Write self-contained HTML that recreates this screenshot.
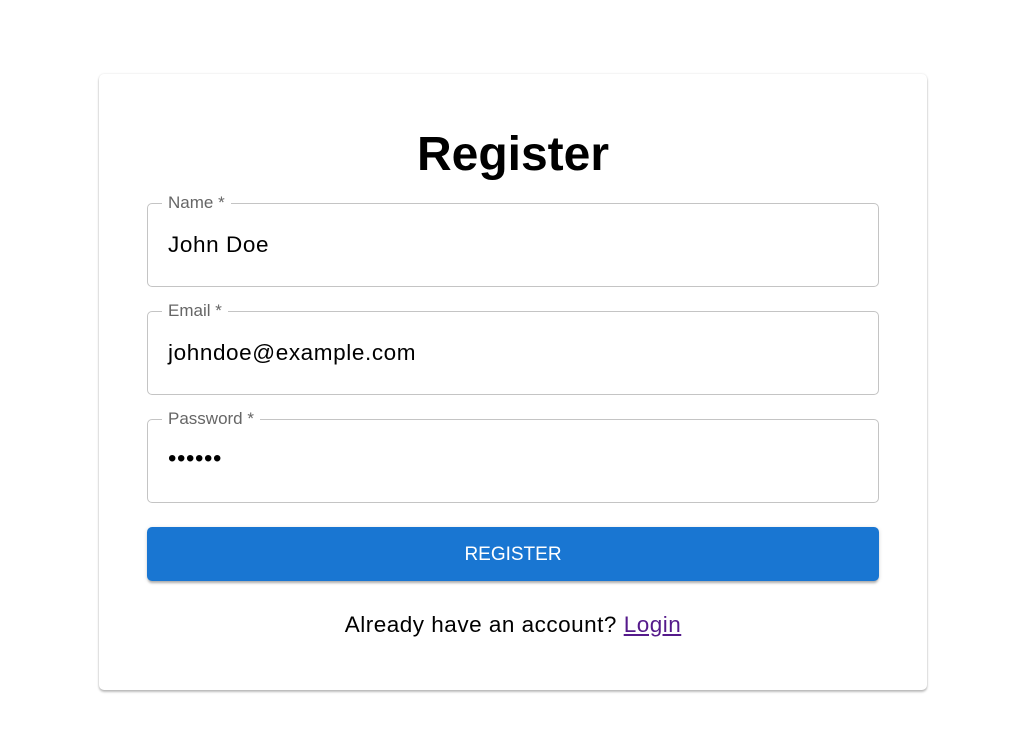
<!DOCTYPE html>
<html><head><style>
body{margin:0;background:#fff;font-family:"Liberation Sans",Arial,sans-serif;width:1026px;height:756px;position:relative;overflow:hidden}
.card{position:absolute;left:99px;top:74px;width:828px;height:616px;border-radius:5px;background:#fff;box-shadow:0 2px 2px rgba(0,0,0,.25),0 0 2px rgba(0,0,0,.12)}
h1{position:absolute;left:0;right:0;top:127px;margin:0;text-align:center;font-size:48px;font-weight:bold;line-height:56px;color:#000}
.f{position:absolute;left:147px;width:730px;height:82px;border:1px solid #c4c4c4;border-radius:5px}
.lab{position:absolute;left:14px;top:-11px;background:#fff;padding:0 6px;font-size:17px;color:#666;line-height:20px}
.val{position:absolute;left:20px;top:26px;font-size:22.5px;letter-spacing:0.6px;color:#000;line-height:30px}
.btn{position:absolute;left:147px;top:527px;width:732px;height:54px;background:#1976d2;border-radius:5px;box-shadow:0 3px 2px -1px rgba(0,0,0,.25),0 1px 4px rgba(0,0,0,.15);color:#fff;font-size:19px;text-align:center;line-height:55px}
.ft{position:absolute;left:0;right:0;top:610px;text-align:center;font-size:22.5px;letter-spacing:0.5px;line-height:30px;color:#000}
.ft a{color:#551a8b;text-decoration:underline}
</style></head><body>
<div class="card"></div>
<h1>Register</h1>
<div class="f" style="top:203px"><span class="lab">Name *</span><span class="val">John Doe</span></div>
<div class="f" style="top:311px"><span class="lab">Email *</span><span class="val">johndoe@example.com</span></div>
<div class="f" style="top:419px"><span class="lab">Password *</span><span class="val" style="letter-spacing:0.6px;font-size:24px;top:24px">••••••</span></div>
<div class="btn">REGISTER</div>
<div class="ft">Already have an account? <a>Login</a></div>
</body></html>
